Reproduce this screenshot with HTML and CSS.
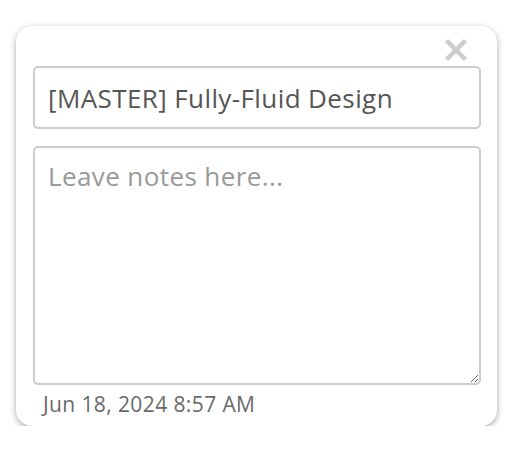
FILE: index.html
```html
<!DOCTYPE html>
<html>
<head>
<meta charset="utf-8">
<link rel="stylesheet" href="styles.css">
</head>
<body>
<div class="card">
  <div class="header">
    <svg class="close" width="24" height="24" viewBox="0 0 24 24" aria-label="Close">
      <path d="M2.5 2.5 L21.5 21.5 M21.5 2.5 L2.5 21.5" stroke="#cccccc" stroke-width="4.5" fill="none"/>
    </svg>
  </div>
  <input class="title" type="text" value="[MASTER] Fully-Fluid Design">
  <textarea class="notes" placeholder="Leave notes here..."></textarea>
  <div class="date">Jun 18, 2024 8:57 AM</div>
</div>
</body>
</html>
```
FILE: styles.css
```css
html, body {
  margin: 0;
  padding: 0;
  background: #fff;
}
body {
  padding: 26px 0 0 16px;
  font-family: "Open Sans", "Noto Sans", sans-serif;
}
.card {
  box-sizing: border-box;
  width: 481px;
  height: 400px;
  background: #fff;
  border-radius: 16px;
  box-shadow: 0 2px 6px rgba(0, 0, 0, 0.35);
  padding: 12px 16px 0 17px;
  display: flex;
  flex-direction: column;
}
.header {
  height: 24px;
  margin-bottom: 4px;
  display: flex;
  justify-content: flex-end;
}
.close {
  display: block;
  margin-right: 13px;
}
.title {
  box-sizing: border-box;
  width: 448px;
  height: 63px;
  border: 2px solid #ccc;
  border-radius: 5px;
  padding: 0 13px;
  font-family: inherit;
  font-size: 26px;
  letter-spacing: 0.4px;
  color: #555;
  outline: none;
  margin: 0;
}
.notes {
  box-sizing: border-box;
  width: 448px;
  height: 239px;
  margin: 17px 0 0 0;
  border: 2px solid #ccc;
  border-radius: 5px;
  padding: 10px 13px;
  font-family: inherit;
  font-size: 26px;
  letter-spacing: 0.4px;
  color: #555;
  outline: none;
  display: block;
  resize: vertical;
}
.notes::placeholder {
  color: #999;
}
.date {
  margin-top: 7px;
  padding-left: 10px;
  font-size: 21px;
  letter-spacing: 0.4px;
  line-height: 24px;
  color: #6a6a6a;
}
```
